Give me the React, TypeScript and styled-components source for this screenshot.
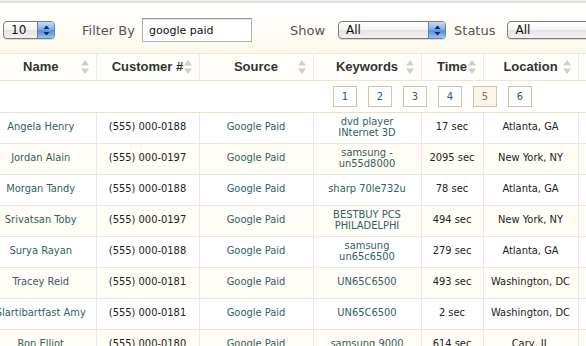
import React from "react";
import styled, { createGlobalStyle } from "styled-components";

const GlobalStyle = createGlobalStyle`
  html, body {
    margin: 0;
    padding: 0;
    background: #ffffff;
    overflow: hidden;
  }
`;

interface IRow {
  name: string;
  phone: string;
  source: string;
  keywords: string;
  time: string;
  location: string;
}

const rows: IRow[] = [
  { name: "Angela Henry", phone: "(555) 000-0188", source: "Google Paid", keywords: "dvd player INternet 3D", time: "17 sec", location: "Atlanta, GA" },
  { name: "Jordan Alain", phone: "(555) 000-0197", source: "Google Paid", keywords: "samsung - un55d8000", time: "2095 sec", location: "New York, NY" },
  { name: "Morgan Tandy", phone: "(555) 000-0188", source: "Google Paid", keywords: "sharp 70le732u", time: "78 sec", location: "Atlanta, GA" },
  { name: "Srivatsan Toby", phone: "(555) 000-0197", source: "Google Paid", keywords: "BESTBUY PCS PHILADELPHI", time: "494 sec", location: "New York, NY" },
  { name: "Surya Rayan", phone: "(555) 000-0188", source: "Google Paid", keywords: "samsung un65c6500", time: "279 sec", location: "Atlanta, GA" },
  { name: "Tracey Reid", phone: "(555) 000-0181", source: "Google Paid", keywords: "UN65C6500", time: "493 sec", location: "Washington, DC" },
  { name: "Slartibartfast Amy", phone: "(555) 000-0181", source: "Google Paid", keywords: "UN65C6500", time: "2 sec", location: "Washington, DC" },
  { name: "Ron Elliot", phone: "(555) 000-0180", source: "Google Paid", keywords: "samsung 9000", time: "614 sec", location: "Cary, IL" },
];

const columns = [
  { title: "Name", width: 110 },
  { title: "Customer #", width: 103 },
  { title: "Source", width: 114 },
  { title: "Keywords", width: 108 },
  { title: "Time", width: 62 },
  { title: "Location", width: 95 },
  { title: "Status", width: 110 },
];

const pages = [1, 2, 3, 4, 5, 6];
const currentPage = 5;

const SortArrows = () => (
  <svg width="8" height="14" viewBox="0 0 8 14">
    <path d="M4 0 L8 5.5 L0 5.5 Z" fill="#cfcfcf" />
    <path d="M4 14 L8 8.5 L0 8.5 Z" fill="#cfcfcf" />
  </svg>
);

const StepperArrows = () => (
  <svg width="7" height="11" viewBox="0 0 7 11">
    <path d="M3.5 0.5 L6.5 4 L0.5 4 Z" fill="#1b2640" />
    <path d="M3.5 10.5 L6.5 7 L0.5 7 Z" fill="#1b2640" />
  </svg>
);

const Select: React.FC<{ value: string; width: number; gap?: number }> = ({ value, width, gap = 0 }) => (
  <ScSelect $width={width} $gap={gap}>
    <ScSelectValue>{value}</ScSelectValue>
    <ScSelectButton>
      <StepperArrows />
    </ScSelectButton>
  </ScSelect>
);

const App: React.FC = () => {
  return (
    <ScPage>
      <GlobalStyle />
      <ScTopEdge />
      <ScToolbar>
        <Select value="10" width={52} />
        <ScLabel $gap={27}>Filter By</ScLabel>
        <ScInput defaultValue="google paid" />
        <ScLabel $gap={38}>Show</ScLabel>
        <Select value="All" width={108} gap={13} />
        <ScLabel $gap={8}>Status</ScLabel>
        <Select value="All" width={120} gap={12} />
      </ScToolbar>

      <ScTable>
        <colgroup>
          {columns.map((c) => (
            <col key={c.title} style={{ width: c.width }} />
          ))}
        </colgroup>
        <thead>
          <tr>
            {columns.map((c) => (
              <ScHeadCell key={c.title}>
                {c.title === "Status" ? "" : c.title}
                <ScSort>
                  <SortArrows />
                </ScSort>
              </ScHeadCell>
            ))}
          </tr>
        </thead>
        <tbody>
          <tr>
            <ScPagerCell colSpan={columns.length}>
              <ScPager>
                {pages.map((p) => (
                  <ScPageButton key={p} $active={p === currentPage}>
                    {p}
                  </ScPageButton>
                ))}
              </ScPager>
            </ScPagerCell>
          </tr>
          {rows.map((r, i) => (
            <ScRow key={r.name} $alt={i % 2 === 1}>
              <ScCell $link>{r.name}</ScCell>
              <ScCell>{r.phone}</ScCell>
              <ScCell $link>{r.source}</ScCell>
              <ScCell $link $wrap>
                {r.keywords}
              </ScCell>
              <ScCell>{r.time}</ScCell>
              <ScCell>{r.location}</ScCell>
              <ScCell />
            </ScRow>
          ))}
        </tbody>
      </ScTable>
    </ScPage>
  );
};

export default App;

const ScPage = styled.div`
  width: 586px;
  height: 346px;
  overflow: hidden;
  background: #ffffff;
`;

const ScTopEdge = styled.div`
  height: 3px;
  background: linear-gradient(#f2f2f2, #d9d9d9);
`;

const ScToolbar = styled.div`
  display: flex;
  align-items: center;
  height: 51px;
  box-sizing: border-box;
  padding: 4px 0 0 3px;
  background: linear-gradient(#ffffff 0%, #fefdf8 45%, #fcf8ea 100%);
  border-bottom: 1px solid #f2e9cf;
  font-family: "DejaVu Sans", Verdana, sans-serif;
  white-space: nowrap;
`;

const ScLabel = styled.span<{ $gap: number }>`
  margin-left: ${(p) => p.$gap}px;
  font-size: 13px;
  color: #555555;
`;

const ScInput = styled.input`
  margin-left: 7px;
  width: 110px;
  height: 24px;
  box-sizing: border-box;
  padding: 0 6px;
  border: 1px solid #b0b0b0;
  border-top-color: #9a9a9a;
  box-shadow: inset 0 1px 1px rgba(0, 0, 0, 0.12);
  font-family: "DejaVu Sans", Verdana, sans-serif;
  font-size: 11px;
  color: #111111;
  background: #ffffff;
  outline: none;
`;

const ScSelect = styled.div<{ $width: number; $gap: number }>`
  display: flex;
  flex: 0 0 auto;
  width: ${(p) => p.$width}px;
  height: 18px;
  margin-left: ${(p) => p.$gap}px;
  box-sizing: border-box;
  border: 1px solid #7c7c7c;
  border-radius: 4px;
  overflow: hidden;
  background: linear-gradient(#ffffff 0%, #f4f4f4 50%, #e4e4e4 51%, #f2f2f2 100%);
  box-shadow: 0 1px 1px rgba(0, 0, 0, 0.15);
`;

const ScSelectValue = styled.span`
  flex: 1 1 auto;
  padding-left: 7px;
  font-size: 12px;
  line-height: 16px;
  color: #111111;
`;

const ScSelectButton = styled.span`
  display: flex;
  align-items: center;
  justify-content: center;
  flex: 0 0 16px;
  border-left: 1px solid #6d7d95;
  background: linear-gradient(#c7def8 0%, #7fb0ee 45%, #4f8fe4 55%, #95c4f6 100%);
`;

const ScTable = styled.table`
  table-layout: fixed;
  border-collapse: collapse;
  margin-left: -14px;
  width: 702px;
  font-family: "DejaVu Sans Condensed", "DejaVu Sans", Verdana, sans-serif;
  font-stretch: condensed;
`;

const ScHeadCell = styled.th`
  position: relative;
  height: 26px;
  padding: 0;
  box-sizing: border-box;
  background: #fffefb;
  border-bottom: 1px solid #efe6c9;
  border-right: 1px solid #f6e2f6;
  font-family: "Liberation Sans", Arial, sans-serif;
  font-stretch: normal;
  font-weight: bold;
  font-size: 13px;
  color: #333333;
  text-align: center;
  white-space: nowrap;
`;

const ScSort = styled.span`
  position: absolute;
  right: 7px;
  top: 6px;
  line-height: 0;
`;

const ScPagerCell = styled.td`
  height: 31px;
  padding: 0 0 0 347px;
  border-bottom: 1px solid #ece3c6;
`;

const ScPager = styled.div`
  display: flex;
  gap: 11px;
`;

const ScPageButton = styled.span<{ $active?: boolean }>`
  display: flex;
  align-items: center;
  justify-content: center;
  width: 24px;
  height: 21px;
  box-sizing: border-box;
  border: 1px solid #d3c3a6;
  background: ${(p) => (p.$active ? "#fdf4ea" : "#ffffff")};
  color: ${(p) => (p.$active ? "#777777" : "#2e6060")};
  font-size: 11px;
`;

const ScRow = styled.tr<{ $alt: boolean }>`
  background: ${(p) => (p.$alt ? "#fffdf6" : "#ffffff")};
`;

const ScCell = styled.td<{ $link?: boolean; $wrap?: boolean }>`
  height: 31px;
  padding: 0 ${(p) => (p.$wrap ? 9 : 0)}px;
  box-sizing: border-box;
  border-bottom: 1px solid #ebe8e4;
  border-right: 1px solid #f6e0f6;
  text-align: center;
  vertical-align: middle;
  font-size: 11px;
  line-height: 10.5px;
  color: ${(p) => (p.$link ? "#2f6262" : "#222222")};
  white-space: ${(p) => (p.$wrap ? "normal" : "nowrap")};
  overflow: hidden;
`;
